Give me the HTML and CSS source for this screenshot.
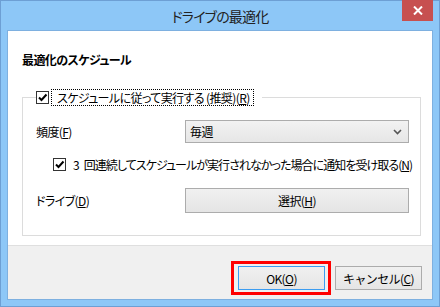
FILE: index.html
```html
<!DOCTYPE html>
<html>
<head>
    <title>ドライブの最適化</title>
    <link rel="stylesheet" href="styles.css">
    <meta charset="UTF-8">
</head>
<body>
    <div class="window">
        <div class="titlebar">
            <span class="title">ドライブの最適化</span>
            <button class="close-btn">
                <svg width="10" height="9" viewBox="0 0 10 9">
                    <path d="M1 0.5 L9 8.5 M9 0.5 L1 8.5" stroke="#fff" stroke-width="2"/>
                </svg>
            </button>
        </div>

        <div class="client">
            <div class="content">
                <h1 class="heading">最適化のスケジュール</h1>

                <fieldset class="group">
                    <legend class="group-legend">
                        <span class="check">
                            <svg width="11" height="11" viewBox="0 0 11 11">
                                <path d="M2 5.5 L4.5 8 L9.5 2.5" stroke="#000" stroke-width="2" fill="none"/>
                            </svg>
                        </span>
                        <span class="focus-label">スケジュールに従って実行する (推奨)(<u>R</u>)</span>
                    </legend>

                    <div class="row row-freq">
                        <span class="row-label">頻度(<u>F</u>)</span>
                        <div class="select">
                            <span>毎週</span>
                            <svg width="9" height="6" viewBox="0 0 9 6">
                                <path d="M1 1 L4.5 4.5 L8 1" stroke="#555" stroke-width="1.6" fill="none"/>
                            </svg>
                        </div>
                    </div>

                    <div class="row row-notify">
                        <span class="check">
                            <svg width="11" height="11" viewBox="0 0 11 11">
                                <path d="M2 5.5 L4.5 8 L9.5 2.5" stroke="#000" stroke-width="2" fill="none"/>
                            </svg>
                        </span>
                        <span class="notify-text">3&ensp;回連続してスケジュールが実行されなかった場合に通知を受け取る(<u>N</u>)</span>
                    </div>

                    <div class="row row-drive">
                        <span class="row-label">ドライブ(<u>D</u>)</span>
                        <button class="btn btn-wide">選択(<u>H</u>)</button>
                    </div>
                </fieldset>
            </div>

            <div class="footer">
                <div class="ok-wrap">
                    <button class="btn btn-ok">OK(<u>O</u>)</button>
                    <span class="highlight"></span>
                </div>
                <button class="btn btn-cancel">キャンセル(<u>C</u>)</button>
            </div>
        </div>
    </div>
</body>
</html>
```

FILE: styles.css
```css
body {
    margin: 0;
    font-family: "Noto Sans CJK JP", "Noto Sans", sans-serif;
    font-size: 12px;
    letter-spacing: -0.6px;
    color: #000;
    font-feature-settings: "palt";
    white-space: nowrap;
}
.window {
    width: 440px;
    height: 307px;
    box-sizing: border-box;
    border: 1px solid #6d9fd4;
    background-color: #8dc7f7;
    padding: 0 6px 6px 6px;
    display: flex;
    flex-direction: column;
}
.titlebar {
    height: 29px;
    position: relative;
    display: flex;
    align-items: center;
    justify-content: center;
}
.title {
    font-size: 14px;
    letter-spacing: -0.8px;
    color: #222;
}
.close-btn {
    position: absolute;
    top: -1px;
    right: 0;
    width: 31px;
    height: 21px;
    border: none;
    padding: 0;
    background-color: #c75050;
    display: flex;
    align-items: center;
    justify-content: center;
}
.client {
    flex: 1;
    border: 1px solid #7eb0e0;
    background-color: #fff;
    display: flex;
    flex-direction: column;
}
.content {
    padding: 21px 11px 0 14px;
}
.heading {
    margin: 0;
    font-size: 12px;
    font-weight: bold;
    line-height: 16px;
}
.group {
    margin: 21px 0 0 0;
    min-width: 0;
    border: 1px solid #dcdcdc;
    padding: 0 11px 22px 13px;
}
.group-legend {
    padding: 0 8px 0 0;
    display: flex;
    align-items: center;
}
.check {
    width: 11px;
    height: 11px;
    border: 1px solid #333;
    background-color: #fff;
    display: inline-flex;
}
.focus-label {
    margin-left: 2px;
    padding: 0 3px 0 5px;
    border: 1px dotted #000;
    line-height: 15px;
}
.row {
    display: flex;
    align-items: center;
}
.row-label {
    width: 149px;
}
.row-freq {
    margin-top: 14px;
    height: 23px;
}
.row-notify {
    margin-top: 13px;
    height: 17px;
    padding-left: 17px;
}
.notify-text {
    margin-left: 7px;
    letter-spacing: -0.95px;
}
.row-drive {
    margin-top: 15px;
    height: 25px;
}
.select {
    flex: 1;
    height: 23px;
    box-sizing: border-box;
    border: 1px solid #acacac;
    background: linear-gradient(#f2f2f2, #e6e6e6);
    display: flex;
    align-items: center;
    justify-content: space-between;
    padding: 0 6px 0 4px;
}
.btn {
    font-family: inherit;
    font-size: 12px;
    letter-spacing: -0.6px;
    color: #000;
    box-sizing: border-box;
    border: 1px solid #acacac;
    background: linear-gradient(#f0f0f0, #e5e5e5);
    padding: 0;
}
.btn-wide {
    flex: 1;
    height: 25px;
}
.footer {
    margin-top: auto;
    height: 54px;
    box-sizing: border-box;
    border-top: 1px solid #dfdfdf;
    background-color: #f0f0f0;
    display: flex;
    justify-content: flex-end;
    align-items: flex-start;
    gap: 10px;
    padding: 20px 10px 0 0;
}
.ok-wrap {
    position: relative;
}
.btn-ok,
.btn-cancel {
    width: 87px;
    height: 24px;
}
.btn-ok {
    border-color: #3c9cf0;
}
.highlight {
    position: absolute;
    left: -7px;
    top: -5px;
    right: -6px;
    bottom: -5px;
    border: 3px solid #f00;
}
```
